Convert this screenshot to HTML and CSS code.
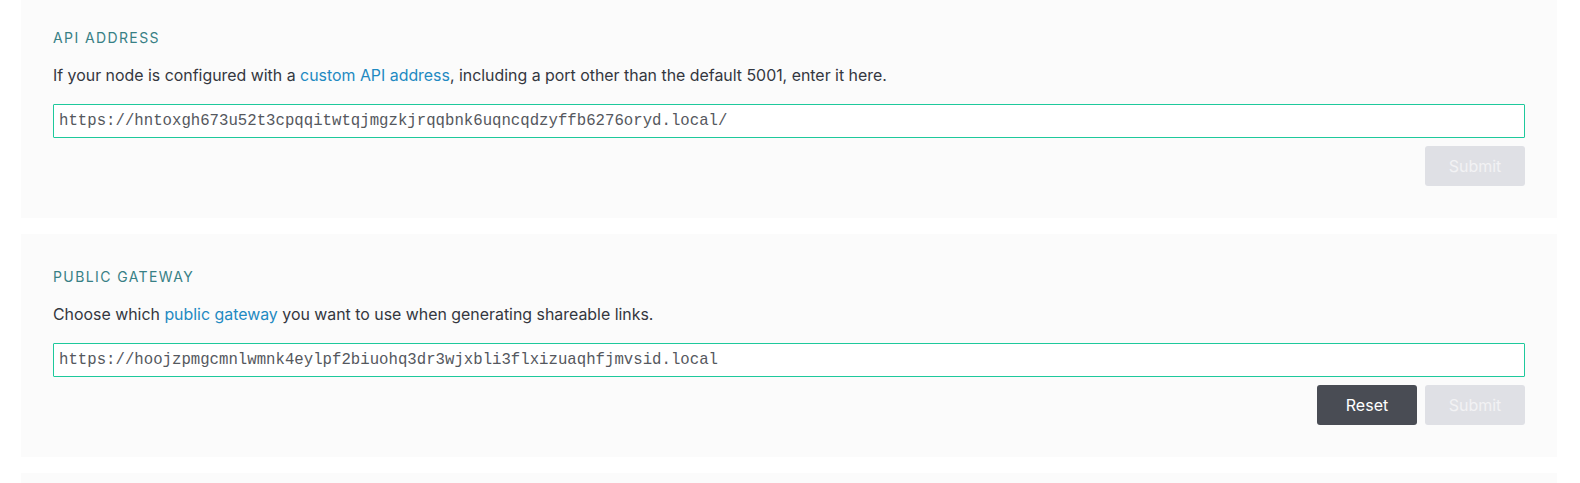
FILE: index.html
```html
<!DOCTYPE html>
<html>
<head>
<meta charset="utf-8">
<link rel="stylesheet" href="styles.css">
</head>
<body>
<div class="page">
  <section class="panel panel-first">
    <h2 class="title">API Address</h2>
    <p class="desc">If your node is configured with a <a href="#">custom API address</a>, including a port other than the default 5001, enter it here.</p>
    <input class="field" type="text" value="https://hntoxgh673u52t3cpqqitwtqjmgzkjrqqbnk6uqncqdzyffb6276oryd.local/">
    <div class="actions">
      <button class="btn btn-submit" disabled>Submit</button>
    </div>
  </section>
  <section class="panel">
    <h2 class="title">Public Gateway</h2>
    <p class="desc">Choose which <a href="#">public gateway</a> you want to use when generating shareable links.</p>
    <input class="field" type="text" value="https://hoojzpmgcmnlwmnk4eylpf2biuohq3dr3wjxbli3flxizuaqhfjmvsid.local">
    <div class="actions">
      <button class="btn btn-reset">Reset</button>
      <button class="btn btn-submit" disabled>Submit</button>
    </div>
  </section>
  <section class="panel panel-last"></section>
</div>
</body>
</html>
```

FILE: styles.css
```css
* { box-sizing: border-box; }
html, body {
  margin: 0;
  padding: 0;
  background: #ffffff;
  font-family: Inter, "Noto Sans", sans-serif;
  color: #34373f;
  overflow: hidden;
}
.page {
  padding: 0 23px 0 21px;
  display: flex;
  flex-direction: column;
  gap: 16px;
}
.panel {
  background: #fbfbfb;
  padding: 34px 32px 32px;
  display: flex;
  flex-direction: column;
}
.panel-first { margin-top: -5px; }
.panel-last { height: 60px; }
.title {
  margin: 0;
  font-size: 14px;
  font-weight: 400;
  line-height: 18px;
  letter-spacing: 0.1em;
  text-transform: uppercase;
  color: #378085;
}
.desc {
  margin: 17px 0 0;
  font-size: 15.9px;
  line-height: 24px;
  color: #34373f;
}
.desc a {
  color: #1f8ac2;
  text-decoration: none;
}
.field {
  margin-top: 16px;
  height: 34px;
  width: 100%;
  border: 1px solid #1ec99c;
  border-radius: 1px;
  background: #ffffff;
  padding: 0 5px 1px;
  font-family: "Liberation Mono", "Courier New", monospace;
  font-size: 15.7px;
  color: #55585e;
  outline: none;
}
.actions {
  margin-top: 8px;
  display: flex;
  justify-content: flex-end;
  gap: 8px;
}
.btn {
  width: 100px;
  height: 40px;
  border: none;
  border-radius: 3px;
  font-family: Inter, "Noto Sans", sans-serif;
  font-size: 16px;
}
.btn-reset {
  background: #494c54;
  color: #ffffff;
}
.btn-submit {
  background: #dfe0e5;
  color: #f2f2f4;
}
```
